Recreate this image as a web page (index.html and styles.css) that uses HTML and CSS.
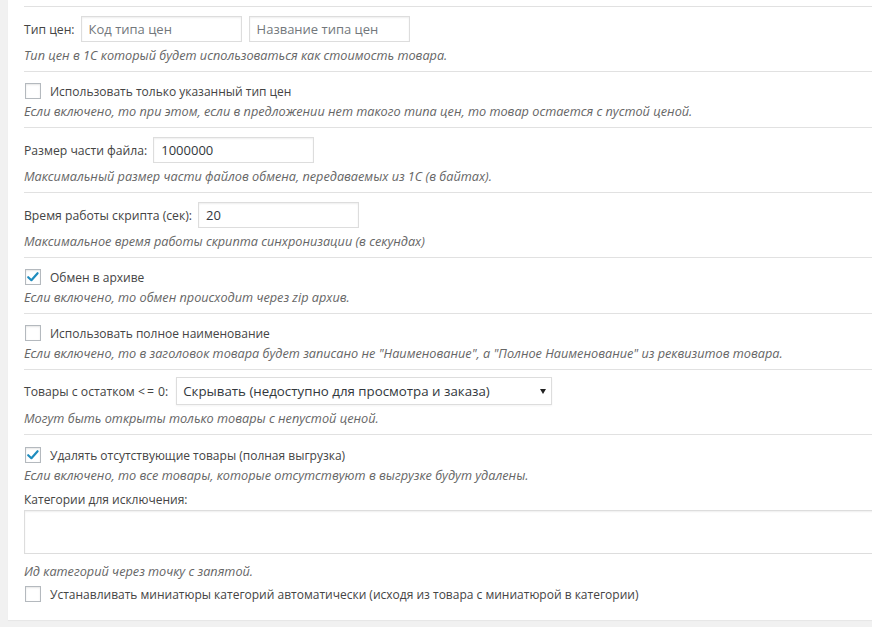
FILE: index.html
```html
<!DOCTYPE html>
<html lang="ru">
<head>
<meta charset="utf-8">
<title>Настройки обмена</title>
<link rel="stylesheet" href="styles.css">
</head>
<body>
<div class="panel">
  <div class="row row-input">
    <div class="field">
      <label class="label">Тип цен:</label>
      <input class="text w160" type="text" placeholder="Код типа цен">
      <input class="text w160" type="text" placeholder="Название типа цен">
    </div>
    <p class="desc">Тип цен в 1С который будет использоваться как стоимость товара.</p>
  </div>

  <div class="row">
    <label class="check"><span class="box"></span>Использовать только указанный тип цен</label>
    <p class="desc">Если включено, то при этом, если в предложении нет такого типа цен, то товар остается с пустой ценой.</p>
  </div>

  <div class="row row-input">
    <div class="field">
      <label class="label">Размер части файла:</label>
      <input class="text w160" type="text" value="1000000">
    </div>
    <p class="desc">Максимальный размер части файлов обмена, передаваемых из 1С (в байтах).</p>
  </div>

  <div class="row row-input">
    <div class="field">
      <label class="label">Время работы скрипта (сек):</label>
      <input class="text w160" type="text" value="20">
    </div>
    <p class="desc">Максимальное время работы скрипта синхронизации (в секундах)</p>
  </div>

  <div class="row">
    <label class="check"><span class="box checked"><svg viewBox="0 0 16 16" width="16" height="16"><path d="M3.2 8.2 L6.4 11.2 L12.6 4.2" fill="none" stroke="#1e8cbe" stroke-width="2.2" stroke-linecap="round" stroke-linejoin="round"/></svg></span>Обмен в архиве</label>
    <p class="desc">Если включено, то обмен происходит через zip архив.</p>
  </div>

  <div class="row">
    <label class="check"><span class="box"></span>Использовать полное наименование</label>
    <p class="desc">Если включено, то в заголовок товара будет записано не "Наименование", а "Полное Наименование" из реквизитов товара.</p>
  </div>

  <div class="row row-select">
    <div class="field">
      <label class="label">Товары с остатком <span class="op">&lt;=</span> 0:</label>
      <div class="select">Скрывать (недоступно для просмотра и заказа)<span class="arrow"></span></div>
    </div>
    <p class="desc">Могут быть открыты только товары с непустой ценой.</p>
  </div>

  <div class="row last">
    <label class="check"><span class="box checked"><svg viewBox="0 0 16 16" width="16" height="16"><path d="M3.2 8.2 L6.4 11.2 L12.6 4.2" fill="none" stroke="#1e8cbe" stroke-width="2.2" stroke-linecap="round" stroke-linejoin="round"/></svg></span>Удалять отсутствующие товары (полная выгрузка)</label>
    <p class="desc">Если включено, то все товары, которые отсутствуют в выгрузке будут удалены.</p>
    <p class="caption">Категории для исключения:</p>
    <textarea class="area"></textarea>
    <p class="desc desc-gap">Ид категорий через точку с запятой.</p>
    <label class="check check-end"><span class="box"></span>Устанавливать миниатюры категорий автоматически (исходя из товара с миниатюрой в категории)</label>
  </div>
</div>
</body>
</html>
```
FILE: styles.css
```css
html, body {
  margin: 0;
  padding: 0;
  overflow: hidden;
  height: 627px;
  background: #f1f1f1;
}
body {
  font-family: "Open Sans", "Noto Sans", sans-serif;
  font-size: 12px;
  color: #444;
}
.panel {
  margin-left: 8px;
  margin-right: -40px;
  height: 620px;
  box-sizing: border-box;
  background: #fff;
  padding: 0 0 0 16px;
  display: flex;
  flex-direction: column;
  box-shadow: 0 1px 1px rgba(0,0,0,0.04);
}
.row {
  border-top: 1px solid #e1e1e1;
  margin-top: 6px;
  padding: 9px 0 6px 0;
}
.row + .row { margin-top: 0; }
.row-select { padding-top: 7px; }
.field {
  display: flex;
  align-items: center;
  gap: 7px;
  height: 26px;
}
.row-select .field { height: 28px; }
.label { white-space: nowrap; font-size: 12.2px; margin-right: -1px; }
.op { letter-spacing: 2px; margin-right: -1px; }
.text {
  box-sizing: border-box;
  height: 26px;
  border: 1px solid #ddd;
  box-shadow: inset 0 1px 2px rgba(0,0,0,0.07);
  font-family: inherit;
  font-size: 13px;
  color: #32373c;
  padding: 0 7px;
  margin: 0;
  outline: none;
}
.text::placeholder { color: #72777c; }
.w160 { width: 161px; }
.desc {
  margin: 3px 0 0 0;
  line-height: 20px;
  font-size: 12.7px;
  font-style: italic;
  color: #666;
  white-space: nowrap;
}
.row > .check + .desc { margin-top: 0; }
.check {
  display: flex;
  align-items: center;
  height: 20px;
  white-space: nowrap;
}
.box {
  box-sizing: border-box;
  width: 16px;
  height: 16px;
  border: 1px solid #b4b9be;
  box-shadow: inset 0 1px 2px rgba(0,0,0,0.1);
  margin: 0 9px 0 1px;
  flex: none;
  display: flex;
  align-items: center;
  justify-content: center;
  background: #fff;
}
.box svg { display: block; margin: -1px; }
.select {
  box-sizing: border-box;
  position: relative;
  width: 376px;
  height: 28px;
  border: 1px solid #ddd;
  box-shadow: 0 1px 2px rgba(0,0,0,0.05);
  font-size: 13.3px;
  color: #32373c;
  line-height: 26px;
  padding-left: 6px;
  margin-left: 2px;
  white-space: nowrap;
}
.arrow {
  position: absolute;
  right: 5px;
  top: 11px;
  width: 0;
  height: 0;
  border-left: 3px solid transparent;
  border-right: 3px solid transparent;
  border-top: 5px solid #222;
}
.last { padding-top: 10px; padding-bottom: 0; }
.caption {
  margin: 5px 0 0 0;
  line-height: 20px;
}
.area {
  display: block;
  box-sizing: border-box;
  width: 100%;
  height: 44px;
  border: 1px solid #ddd;
  box-shadow: inset 0 1px 2px rgba(0,0,0,0.07);
  margin: 0;
  resize: none;
  outline: none;
}
.last .desc-gap { margin-top: 7px; }
.check-end { margin-top: 3px; }
```
